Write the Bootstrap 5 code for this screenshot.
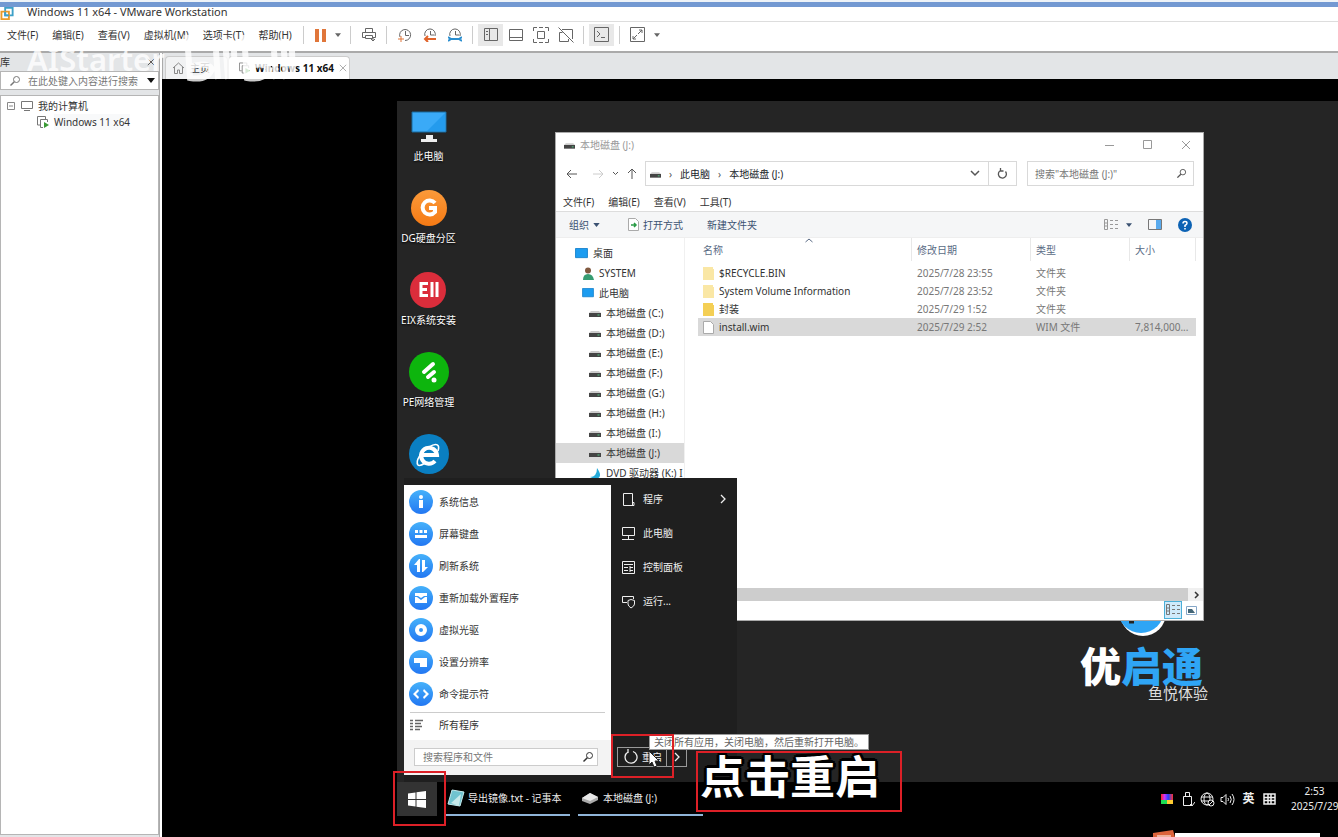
<!DOCTYPE html>
<html lang="zh-CN">
<head>
<meta charset="utf-8">
<meta name="viewport" content="width=device-width, initial-scale=1">
<title>Windows 11 x64 - VMware Workstation</title>
<link rel="stylesheet" href="https://cdn.jsdelivr.net/npm/bootstrap@5.3.0/dist/css/bootstrap.min.css">
<style>
  body { font: 10px/16px "Noto Sans", "Noto Sans CJK SC", sans-serif; color: #333; background: #fff; }
  svg { display: block; flex: none; fill: none; stroke: currentColor; }
  button, input { font: inherit; color: inherit; border: 0; background: none; padding: 0; }
  input { min-width: 0; outline: 0; }
  input::placeholder { color: #777; opacity: 1; }
  a { color: inherit; text-decoration: none; }
  .app { height: 100vh; min-height: 640px; }
  .accent { height: 7px; background: #7399d2; border-top: 2px solid #eef3f8; }
  .titlebar { height: 15px; border-bottom: 1px solid #ddd; font-size: 11px; gap: 12px; line-height: 10px; color: #333; }
  .menubar { height: 31px; border-bottom: 2px solid #aaa; padding-bottom: 3px; color: #666; }
  .menus { width: 298px; padding-left: 7px; gap: 14px; color: #333; }
  .tool { width: 25px; height: 22px; display: grid; place-items: center; }
  .tool.on { background: #e8e8e8; }
  .pause { width: 22px; }
  .drop { width: 14px; }
  .rule { width: 1px; height: 18px; margin: 0 5px; background: #ccc; }
  .side { width: 160px; background: #e3e5e7; border-right: 1px solid #aaa; }
  .sidehead { height: 18px; }
  .find { height: 19px; border: 1px solid #b5b5b5; background: #fff; padding: 0 3px 0 8px; gap: 7px; color: #777; }
  .tree { margin: 5px 0 2px; border: 1px solid #b5b5b5; background: #fff; padding: 2px 6px; }
  .node { gap: 5px; }
  .leaf { padding-left: 30px; }
  .workspace { margin-left: 2px; background: #000; }
  .tabs { height: 26px; background: #e3e5e7; border-left: 1px solid #aaa; padding-left: 2px; }
  .vtab { height: 23px; padding: 0 6px; border: 1px solid #ccc; border-bottom: 0; border-radius: 4px 4px 0 0; gap: 5px; background: #f1f2f3; }
  .vtab.now { background: #fff; font-weight: 700; color: #111; }
  .home { width: 63px; } .guest { width: 122px; }
  .screen { margin: 22px 0 0 235px; background: #252525; }
  .watermark { left: 27px; top: 33px; color: #fff; opacity: .8; pointer-events: none; font: 600 31px/52px "Noto Sans", sans-serif; }
  .shortcuts { left: 0; top: 5px; width: 63px; color: #fff; }
  .shortcut { height: 82px; text-align: center; text-shadow: 0 1px 2px #000; }
  .shortcut svg { margin: 0 auto 2px; }
  .brand { left: 679px; top: 488px; width: 132px; color: #fff; }
  .brand svg { margin-left: 44px; }
  .brandname { font: 900 41px/40px "Noto Sans CJK SC", sans-serif; white-space: nowrap; margin: 7px 0 1px 4px; }
  .brandname span { color: #2fa5f5; }
  .slogan { font: 15px/16px "Noto Sans CJK SC", sans-serif; text-align: right; color: #ddd; }
  .explorer { left: 158px; top: 31px; width: 649px; height: 489px; background: #fff; border: 1px solid #aaa; }
  .wtitle { height: 24px; padding: 0 12px 0 8px; gap: 5px; color: #999; }
  .wnav { height: 33px; padding: 0 9px 0 10px; color: #555; }
  .addr { height: 25px; border: 1px solid #d9d9d9; }
  .wsearch { width: 167px; margin-left: 10px; padding: 0 6px 0 7px; }
  .wmenu { height: 22px; gap: 14px; padding: 4px 0 0 7px; border-bottom: 1px solid #ddd; }
  .wtools { height: 26px; background: #f5f6f7; border-bottom: 1px solid #eee; padding: 0 11px 0 13px; color: #3b5272; }
  .drives { width: 129px; padding-top: 5px; white-space: nowrap; overflow: hidden; border-right: 1px solid #f0f0f0; }
  .drives li { height: 20px; gap: 5px; }
  .d0 { padding-left: 19px; } .d1 { padding-left: 26px; } .d2 { padding-left: 33px; }
  .pick { background: #d9d9d9; }
  .files { width: 498px; table-layout: fixed; margin-left: 13px; color: #777; border-collapse: separate; border-spacing: 0; }
  .files th { height: 23px; font-weight: 400; color: #5a6b85; border-right: 1px solid #e8e8e8; padding: 0 5px; }
  .files td { height: 18px; padding: 0 5px; white-space: nowrap; line-height: 16px; }
  .files .cell { display: flex; gap: 5px; color: #333; align-items: center; }
  .files .first td { height: 21px; padding-top: 3px; }
  .hscroll { height: 13px; background: #f0f0f0; padding-right: 3px; }
  .thumb { background: #cdcdcd; margin-right: 5px; }
  .wstatus { height: 19px; padding-right: 3px; color: #777; }
  .wview { width: 18px; height: 18px; display: grid; place-items: center; }
  .wview.on { background: #cfeafb; border: 1px solid #4bafd8; }
  .startmenu { left: 7px; bottom: 55px; width: 333px; height: 304px; background: #1f1f1f; }
  .apps { width: 207px; margin: 7px 0 7px; background: #fff; }
  .apps li { height: 32px; gap: 6px; padding-left: 5px; }
  .apps ul { padding-top: 1px; }
  .allapps { height: 28px; margin: 2px 6px 0; border-top: 1px solid #ccc; gap: 15px; padding-bottom: 3px; }
  .sfoot { height: 35px; background: #f3f3f3; padding: 8px 13px 9px 10px; }
  .sfoot .box { height: 18px; background: #fff; border: 1px solid #ccc; padding: 0 3px 0 8px; }
  .places { color: #eee; padding: 4px 10px 15px 10px; }
  .places li { height: 34px; gap: 7px; }
  .power { margin-left: -4px; border: 1px solid #999; width: 70px; height: 20px; }
  .power .go { width: 49px; gap: 3px; padding-left: 5px; border-right: 1px solid #999; }
  .taskbar { height: 55px; background: #000; color: #eee; padding-bottom: 21px; }
  .winkey { width: 40px; background: #333; display: grid; place-items: center; }
  .task { width: 125px; border-bottom: 2px solid #8fb4d8; gap: 3px; padding-left: 2px; }
  .task + .task { padding-left: 3px; gap: 4px; }
  .tray { gap: 5px; }
  .tray svg { width: 15px; }
  .ime { width: 17px; text-align: center; font-size: 12px; font-weight: 700; }
  .clock { width: 47px; line-height: 15px; margin-left: 9px; white-space: nowrap; }
  .popup { right: 18px; bottom: 0; width: 167px; height: 7px; }
  .popup i { width: 145px; height: 4px; background: #fff; }
  .tip { left: 252px; bottom: 87px; height: 16px; padding: 0 4px; background: #fff; border: 1px solid #999; color: #666; line-height: 14px; white-space: nowrap; }
  .mark-box { border: 2px solid #dc2027; }
  .m1 { left: -4px; bottom: 11px; width: 53px; height: 55px; }
  .m2 { left: 214px; bottom: 59px; width: 63px; height: 44px; }
  .m3 { left: 299px; bottom: 25px; width: 206px; height: 61px; }
  .caption { left: 303px; bottom: 39px; font: 700 45px/46px "Noto Sans CJK SC", sans-serif; color: #fff; white-space: nowrap;
    text-shadow: 3px 0 #000, -3px 0 #000, 0 3px #000, 0 -3px #000, 2px 2px #000, -2px 2px #000, 2px -2px #000, -2px -2px #000; }
  .pointer { left: 251px; bottom: 69px; }
</style>
</head>
<body>
<svg width="0" height="0" class="position-absolute" aria-hidden="true">
  <defs>
    <linearGradient id="blue" x2="0" y2="1"><stop stop-color="#45b1fa"/><stop offset="1" stop-color="#2277f2"/></linearGradient>
    <linearGradient id="orange" x2="0" y2="1"><stop stop-color="#fb9a3a"/><stop offset="1" stop-color="#f57a14"/></linearGradient>
    <linearGradient id="hue" x2="1" y2="0"><stop stop-color="#f22"/><stop offset=".3" stop-color="#c3f"/><stop offset=".6" stop-color="#24f"/><stop offset="1" stop-color="#f33"/></linearGradient>
  </defs>
  <symbol id="drive" viewBox="0 0 12 8"><path d="M2 2h8l2 2H0z" fill="#ccc" stroke="none"/><path d="M0 4h12v4H0z" fill="#444" stroke="none"/><path d="M8.500 6h2" stroke="#5c8"/></symbol>
  <symbol id="lens" viewBox="0 0 12 12"><circle cx="7.500" cy="4.500" r="3"/><path d="M5.300 6.700 1.500 10.500" stroke-width="1.500"/></symbol>
  <symbol id="caret" viewBox="0 0 8 5"><path d="M0 0h8L4 5z" fill="currentColor" stroke="none"/></symbol>
  <symbol id="cross" viewBox="0 0 10 10"><path d="m1 1 8 8M9 1 1 9"/></symbol>
  <symbol id="vm" viewBox="0 0 12 12"><path d="M3 9H.5V.5h8V3M10.500 6V3.500h-7v8H6"/><path d="m7 6 5 3-5 3z" fill="#3a9a35" stroke="none"/></symbol>
  <symbol id="clk" viewBox="0 0 14 14"><path d="M2 9a5.500 5.500 0 1 1 5 3.500M7.500 3v4.500H11"/></symbol>
  <symbol id="clkhalf" viewBox="0 0 14 14"><path d="M2 8a5.300 5.300 0 1 1 10 0M7.500 3v4H11"/></symbol>
  <symbol id="folder" viewBox="0 0 11 13"><path d="M0 0h10v2h1v11H0z" fill="currentColor" stroke="none"/></symbol>
  <symbol id="monitor" viewBox="0 0 14 12"><path d="M.5.5h13v10H.5z" fill="#1c9cf0" stroke="#1782cc"/></symbol>
  <symbol id="detail" viewBox="0 0 14 12"><path d="M.5.500h3v10h-3zM.5 4h3M.5 7h3M6 1.500h3m2 0h3M6 5.500h3m2 0h3M6 9.500h3m2 0h3"/></symbol>
</svg>

<div class="app d-flex flex-column overflow-hidden position-relative">
  <div class="accent flex-shrink-0"></div>
  <header class="titlebar d-flex align-items-start flex-shrink-0">
    <svg width="15" height="14" viewBox="0 0 15 15" stroke-width="2"><path d="M5 1h8v8H5z" stroke="#3da0c8"/><path d="M1 5h8v8H1z" stroke="#e99a28"/><path d="M5 5v4h4" stroke="#3da0c8"/></svg>
    <span>Windows 11 x64 - VMware Workstation</span>
  </header>
  <div class="menubar d-flex align-items-center flex-shrink-0">
    <nav class="menus d-flex text-nowrap flex-shrink-0"><a href="#">文件(F)</a><a href="#">编辑(E)</a><a href="#">查看(V)</a><a href="#">虚拟机(M)</a><a href="#">选项卡(T)</a><a href="#">帮助(H)</a></nav>
    <span class="rule"></span>
    <button class="tool pause" aria-label="暂停"><svg width="11" height="13" viewBox="0 0 11 13"><path d="M0 0h4v13H0zM7 0h4v13H7z" fill="#e0763a" stroke="none"/></svg></button>
    <button class="tool drop" aria-label="电源选项"><svg width="6" height="4"><use href="#caret"/></svg></button>
    <span class="rule"></span>
    <button class="tool" aria-label="发送按键"><svg width="14" height="14" viewBox="0 0 14 14"><path d="M3.500 4.500v-4h7v4M3 9.500H.5v-5h13v5H11M3.500 7.500h7v3h-7zM11 9v4M9 11l2 2 2-2"/></svg></button>
    <span class="rule"></span>
    <button class="tool" aria-label="拍摄快照"><svg width="14" height="14"><use href="#clk"/><path d="M0 11h6M3 8v6" stroke="#e0763a"/></svg></button>
    <button class="tool" aria-label="恢复快照"><svg width="14" height="14"><use href="#clkhalf"/><path d="M13 11H2M5 8l-3 3 3 3" stroke="#e0632a" stroke-width="2"/></svg></button>
    <button class="tool" aria-label="管理快照"><svg width="14" height="14"><use href="#clkhalf"/><path d="M3 11h8M0 9l3 2-3 2M14 9l-3 2 3 2" stroke="#2b8fd0" stroke-width="2"/></svg></button>
    <span class="rule"></span>
    <button class="tool on" aria-label="显示库"><svg width="14" height="14" viewBox="0 0 14 14"><path d="M.5.5h13v12H.5zM5.500.5v12M2 3.500h2M2 6.500h2"/></svg></button>
    <button class="tool" aria-label="缩略图栏"><svg width="14" height="14" viewBox="0 0 14 14"><path d="M.5 1.500h13v11H.5zM.5 9.500h13"/></svg></button>
    <button class="tool" aria-label="全屏"><svg width="16" height="16" viewBox="0 0 16 16"><path d="M4.500 4.500h7v7h-7zM.5 4V.5H4M6 .5h4M12 .5h3.500V4M15.500 12v3.500H12M10 15.500H6M4 15.500H.5V12"/></svg></button>
    <button class="tool" aria-label="Unity"><svg width="16" height="16" viewBox="0 0 16 16"><path d="M1.500 5.500v9h9M4 2.500h10.500V12M4.500 5.500h-3M.5.5l15 15M10.500 14.500V12"/></svg></button>
    <span class="rule"></span>
    <button class="tool on" aria-label="控制台"><svg width="16" height="16" viewBox="0 0 16 16"><path d="M.5.5h14v14H.5zM3 4l3 3-3 3M7 10.500h4"/></svg></button>
    <span class="rule"></span>
    <button class="tool" aria-label="拉伸"><svg width="16" height="16" viewBox="0 0 16 16"><path d="M.5.5h14v14H.5zM8 7l4-4M9 3h3v3M7 8l-4 4M3 9v3h3"/></svg></button>
    <button class="tool drop" aria-label="拉伸选项"><svg width="6" height="4"><use href="#caret"/></svg></button>
  </div>

  <main class="d-flex flex-grow-1 overflow-hidden">
    <aside class="side d-flex flex-column flex-shrink-0">
      <div class="sidehead d-flex align-items-center justify-content-between pe-1"><label for="lib">库</label><button aria-label="关闭库"><svg width="8" height="8" viewBox="0 0 10 10"><use href="#cross"/></svg></button></div>
      <div class="find d-flex align-items-center"><svg width="12" height="12"><use href="#lens"/></svg><input id="lib" class="flex-grow-1" placeholder="在此处键入内容进行搜索"><button aria-label="展开"><svg width="8" height="5" color="#111"><use href="#caret"/></svg></button></div>
      <div class="tree flex-grow-1">
        <div class="node d-flex align-items-center"><svg width="9" height="9" color="#888"><path d="M.5.500h7v7h-7zM2 4h4"/></svg><svg width="12" height="11" color="#777"><path d="M.5.5h11v7H.5zM3 9.500h6"/></svg><span>我的计算机</span></div>
        <div class="node leaf d-flex align-items-center"><svg width="12" height="12" color="#777"><use href="#vm"/></svg><span class="bg-light">Windows 11 x64</span></div>
      </div>
    </aside>

    <section class="workspace d-flex flex-column flex-grow-1 overflow-hidden">
      <div class="tabs d-flex align-items-end flex-shrink-0">
        <a href="#" class="vtab home d-flex align-items-center"><svg width="13" height="12" viewBox="0 0 13 12" color="#888"><path d="m1 6 5.500-5L12 6M2.500 5v6.500h3V8h2v3.500h3V5"/></svg>主页</a>
        <a href="#" class="vtab now guest d-flex align-items-center text-nowrap"><svg class="ms-1" width="11" height="12" color="#888"><use href="#vm"/></svg><span>Windows 11 x64</span><svg width="8" height="8" viewBox="0 0 10 10" color="#999"><use href="#cross"/></svg></a>
      </div>

      <div class="screen position-relative flex-grow-1 d-flex flex-column">
        <nav class="shortcuts position-absolute text-nowrap">
          <a href="#" class="shortcut d-block"><svg width="40" height="40" viewBox="0 0 40 40" stroke="none"><path d="M3 6h34v20H3z" fill="#3aaaf7" stroke="#186b9f"/><path d="m18 25 18-18v18z" fill="#249bed" stroke="none"/><path d="M17 29h7v4h4v3H12v-3h5z" fill="#eee" stroke="none"/></svg>此电脑</a>
          <a href="#" class="shortcut d-block"><svg width="40" height="40" viewBox="0 0 40 40"><circle cx="20" cy="20" r="18" fill="url(#orange)" stroke="none"/><path d="M26 15a7 7 0 1 0 0 9v-4h-6" stroke="#fff" stroke-width="4"/></svg>DG硬盘分区</a>
          <a href="#" class="shortcut d-block"><svg width="40" height="40" viewBox="0 0 40 40"><circle cx="19" cy="20" r="18" fill="#db2d3b" stroke="none"/><path d="M19 13.500h-7v12h7M12 19.500h6M23 12v15M28 12v15" stroke="#fff" stroke-width="3"/></svg>EIX系统安装</a>
          <a href="#" class="shortcut d-block"><svg width="40" height="40" viewBox="0 0 40 40"><circle cx="20" cy="20" r="20" fill="#0db50d" stroke="none"/><path d="m15 20 9-8M19 25l6-5" stroke="#fff" stroke-width="4" stroke-linecap="round"/><circle cx="25" cy="28" r="2.500" fill="#fff" stroke="none"/></svg>PE网络管理</a>
          <a href="#" class="shortcut d-block" aria-label="Internet Explorer"><svg width="40" height="40" viewBox="0 0 40 40"><circle cx="20" cy="20" r="20" fill="#0a7fc2" stroke="none"/><path d="M13 21h15a8 8 0 1 0-2 6" stroke="#fff" stroke-width="4"/><path d="M29 17c2-6-1-9-9-4C12 18 6 27 9 31c1 1 4 0 7-2" stroke="#fff" stroke-width="1.600"/></svg></a>
        </nav>

        <div class="brand position-absolute"><svg width="46" height="48" viewBox="0 0 46 48"><circle cx="23" cy="24" r="23" fill="#fff" stroke="none"/><circle cx="21" cy="21" r="23" fill="#2fa5f5" stroke="none"/><path d="M9 33h5" stroke="#222" stroke-width="3"/></svg><div class="brandname">优<span>启通</span></div><div class="slogan">鱼悦体验</div></div>

        <section class="explorer position-absolute d-flex flex-column">
          <div class="wtitle d-flex align-items-center flex-shrink-0"><svg width="11" height="8"><use href="#drive"/></svg><span>本地磁盘 (J:)</span><span class="ms-auto d-flex gap-4 align-items-center"><button class="me-1" aria-label="最小化"><svg width="10" height="10"><path d="M0 5.500h9"/></svg></button><button class="me-1" aria-label="最大化"><svg width="10" height="10"><path d="M.5.500h8v8h-8z"/></svg></button><button aria-label="关闭"><svg width="10" height="10"><use href="#cross"/></svg></button></span></div>
          <div class="wnav d-flex align-items-center flex-shrink-0">
            <button aria-label="后退"><svg width="11" height="10"><path d="M11 5H1m4-4L1 5l4 4"/></svg></button><button class="ms-3" aria-label="前进"><svg width="11" height="10" color="#ccc"><path d="M0 5h10M6 1l4 4-4 4"/></svg></button><button class="ms-2" aria-label="最近"><svg width="7" height="5"><path d="m1 1 2.500 2.500L6 1"/></svg></button><button class="mx-2" aria-label="向上"><svg width="10" height="11"><path d="M5 11V1M1 5l4-4 4 4"/></svg></button>
            <div class="addr d-flex align-items-center flex-grow-1 ps-1 gap-2"><svg width="11" height="8"><use href="#drive"/></svg><span>›</span><span class="text-dark">此电脑</span><span>›</span><span class="text-dark">本地磁盘 (J:)</span><button class="ms-auto me-2" aria-label="地址列表"><svg width="10" height="7"><path d="m1 1 4 4 4-4" stroke-width="1.500"/></svg></button></div>
            <button class="addr border-start-0 px-2" aria-label="刷新"><svg width="11" height="11"><path d="M3.500 2.500a4 4 0 1 0 5 1M3.500 0v3h3" stroke-width="1.300"/></svg></button>
            <div class="addr wsearch d-flex align-items-center"><input class="flex-grow-1" aria-label="搜索" placeholder='搜索"本地磁盘 (J:)"'><svg width="11" height="11"><use href="#lens"/></svg></div>
          </div>
          <nav class="wmenu d-flex flex-shrink-0"><a href="#">文件(F)</a><a href="#">编辑(E)</a><a href="#">查看(V)</a><a href="#">工具(T)</a></nav>
          <div class="wtools d-flex align-items-center flex-shrink-0">
            <button class="d-flex align-items-center gap-1">组织<svg width="7" height="4"><use href="#caret"/></svg></button>
            <button class="d-flex align-items-center gap-1 mx-4 ps-1"><svg width="11" height="13"><path d="M.5.500h7l3 3v9H.5z" fill="#fff" stroke="#aaa"/><path d="M3 7h5M6 5l2 2-2 2" stroke="#289b45" stroke-width="1.500"/></svg>打开方式</button>
            <button>新建文件夹</button>
            <span class="ms-auto d-flex align-items-center"><button class="d-flex align-items-center gap-2" aria-label="视图"><svg width="14" height="12" color="#999"><use href="#detail"/></svg><svg width="6" height="4"><use href="#caret"/></svg></button><button class="mx-3" aria-label="预览窗格"><svg width="14" height="11"><path d="M.5.500h13v10H.5z" stroke="#777"/><path d="M8 1h5v9H8z" fill="#59aaed" stroke="none"/></svg></button><button aria-label="帮助"><svg width="14" height="14" viewBox="0 0 14 14"><circle cx="7" cy="7" r="7" fill="#0c62b4" stroke="none"/><path d="M5 5.500q0-2 2-2t2 1.700Q9 6.500 7 7.500V9M7 10v1.500" stroke="#fff" stroke-width="1.500"/></svg></button></span>
          </div>
          <div class="d-flex flex-grow-1 overflow-hidden">
            <ul class="drives list-unstyled m-0 flex-shrink-0" id="drives">
              <li class="d0 d-flex align-items-center"><svg width="13" height="11"><use href="#monitor"/></svg>桌面</li>
              <li class="d1 d-flex align-items-center"><svg width="12" height="13"><circle cx="6" cy="3.500" r="3" fill="#80583f" stroke="none"/><path d="M1 13q0-6 5-6t6 6z" fill="#379c72" stroke="none"/></svg>SYSTEM</li>
              <li class="d1 d-flex align-items-center"><svg width="12" height="10"><use href="#monitor"/></svg>此电脑</li>
            </ul>
            <div>
              <table class="files"><colgroup><col style="width:214px"><col style="width:119px"><col style="width:99px"><col style="width:66px"></colgroup>
                <thead><tr><th class="position-relative">名称<svg class="position-absolute top-0 start-50" width="8" height="5"><path d="m.5 4 3.500-3 3.500 3"/></svg></th><th>修改日期</th><th>类型</th><th>大小</th></tr></thead>
                <tbody>
                  <tr class="first"><td><span class="cell"><svg width="11" height="13" color="#fae7a5"><use href="#folder"/></svg>$RECYCLE.BIN</span></td><td>2025/7/28 23:55</td><td>文件夹</td><td></td></tr>
                  <tr><td><span class="cell"><svg width="11" height="13" color="#fae7a5"><use href="#folder"/></svg>System Volume Information</span></td><td>2025/7/28 23:52</td><td>文件夹</td><td></td></tr>
                  <tr><td><span class="cell"><svg width="11" height="13" color="#f4cf55"><use href="#folder"/></svg>封装</span></td><td>2025/7/29 1:52</td><td>文件夹</td><td></td></tr>
                  <tr class="pick"><td><span class="cell"><svg width="11" height="13"><path d="M.5.500h7l3 3v9H.5z" fill="#fff" stroke="#aaa"/></svg>install.wim</span></td><td>2025/7/29 2:52</td><td>WIM 文件</td><td>7,814,000...</td></tr>
                </tbody>
              </table>
            </div>
          </div>
          <div class="hscroll d-flex flex-shrink-0"><div class="thumb flex-grow-1"></div><svg class="align-self-center" width="7" height="8"><path d="m2 1 3 3-3 3" stroke-width="1.500"/></svg></div>
          <div class="wstatus d-flex justify-content-end flex-shrink-0"><button class="wview on" aria-label="详细信息"><svg width="14" height="12"><use href="#detail"/></svg></button><button class="wview" aria-label="大图标"><svg width="11" height="9"><path d="M.5.500h10v8H.5z" stroke="#86a7c8"/><path d="M2 3h4l3 4H2z" fill="#467" stroke="none"/></svg></button></div>
        </section>

        <section class="startmenu position-absolute d-flex">
          <div class="apps d-flex flex-column flex-shrink-0">
            <ul class="list-unstyled m-0 flex-grow-1" id="apps"></ul>
            <a href="#" class="allapps d-flex align-items-center flex-shrink-0"><svg width="14" height="13" color="#666"><path d="M0 1.500h3m2 0h8M0 4.500h3m2 0h6M0 7.500h3m2 0h7M0 10.500h3m2 0h5" stroke-width="1.300"/></svg>所有程序</a>
            <div class="sfoot"><div class="box d-flex align-items-center"><input class="flex-grow-1" aria-label="搜索程序和文件" placeholder="搜索程序和文件"><svg width="12" height="12"><use href="#lens"/></svg></div></div>
          </div>
          <div class="places d-flex flex-column flex-grow-1">
            <ul class="list-unstyled m-0 flex-grow-1">
              <li class="d-flex align-items-center"><svg width="15" height="15"><path d="M2.500 1.500h9v12h-9zM11 10.500h2v3h-3"/></svg>程序<svg class="ms-auto" width="8" height="11"><path d="m2 1 4 4-4 4" stroke-width="1.300"/></svg></li>
              <li class="d-flex align-items-center"><svg width="15" height="15"><path d="M1.500 1.500h12v8h-12zM7.500 9v4M1 13.500h12"/></svg>此电脑</li>
              <li class="d-flex align-items-center"><svg width="15" height="15"><path d="M1.500 1.500h12v12h-12zM3 4.500h9M3 7.500h4M3 10.500h4M9 6v6M9 7.500h3M9 10.500h3"/></svg>控制面板</li>
              <li class="d-flex align-items-center"><svg width="15" height="15"><path d="M6 8.500H1.500v-6h11V5M7 6.500l3-1 3.500 1V10q0 2-3.500 4Q7 12 7 10z"/></svg>运行...</li>
            </ul>
            <div class="power d-flex"><button class="go d-flex align-items-center"><svg width="16" height="16"><path d="M5 3a6 6 0 1 0 5-.5M5 0v4" stroke-width="1.300"/></svg>重启</button><button class="flex-grow-1" aria-label="更多电源选项"><svg class="mx-auto" width="8" height="12"><path d="m2 2 4 4-4 4" stroke-width="1.300"/></svg></button></div>
          </div>
        </section>

        <footer class="taskbar d-flex mt-auto flex-shrink-0">
          <button class="winkey" aria-label="开始"><svg width="18" height="17" viewBox="0 0 18 17"><path d="M0 2.500 7.500 1.500V8H0zM8.500 1.300 18 0v8H8.500zM0 9h7.500v6.500L0 14.500zM8.500 9H18v8l-9.500-1.300z" fill="#fff" stroke="none"/></svg></button>
          <button class="task ms-2 d-flex align-items-center text-nowrap"><svg width="18" height="19" viewBox="0 0 18 19"><path d="m5 1 12 2-4 14L1 15z" fill="#70c3d0" stroke="#c5ecef"/><path d="m4 14 10-9-2 12z" fill="#c6e9eb" stroke="none"/></svg>导出镜像.txt - 记事本</button>
          <button class="task ms-2 d-flex align-items-center text-nowrap"><svg width="18" height="14" viewBox="0 0 18 14"><path d="m1 7 8-5 8 4v3l-8 4-8-3z" fill="#aaa" stroke="none"/><path d="m1 7 8-5 8 4-8 4z" fill="#e8e8e8" stroke="none"/></svg>本地磁盘 (J:)</button>
          <div class="tray ms-auto d-flex align-items-center">
            <svg height="12" viewBox="0 0 15 12"><path d="M1 1h12v10H1z" fill="url(#hue)" stroke="none"/><path d="M1 7h6v4H1z" fill="#1cdd54" stroke="none"/><path d="M7 7h6v4H7z" fill="#fc3" stroke="none"/></svg>
            <svg height="15" viewBox="0 0 15 15"><path d="M5.500 4.500v-4h4v4M3.500 4.500h8v9h-8zM10 12l2 2 3-4"/></svg>
            <svg height="15" viewBox="0 0 15 15"><circle cx="7" cy="7" r="6"/><ellipse cx="7" cy="7" rx="3" ry="6"/><path d="M1 5h12M1 9h8"/><circle cx="11" cy="11" r="3" fill="#000"/><path d="m9 13 4-4"/></svg>
            <svg height="13" viewBox="0 0 15 13"><path d="M1 4.500h2l3-3v10l-3-3H1zM8 5q1 1.500 0 3M10 3q2.500 3.500 0 7M12 1q4 5.500 0 11"/></svg>
            <span class="ime">英</span>
            <svg height="14" viewBox="0 0 15 14"><path d="M2 2h11v10H2zM6 2v10M9 2v10M2 5.500h11M2 8.500h11" stroke-width="1.500"/></svg>
            <div class="clock text-center">2:53<br>2025/7/29</div>
          </div>
        </footer>

        <div class="popup position-absolute d-flex align-items-end"><svg width="22" height="7"><path d="m0 3 20-3 2 7H0z" fill="#db633b" stroke="none"/><path d="M4 6h14" stroke="#fff"/></svg><i></i></div>
        <div class="tip position-absolute" role="tooltip">关闭所有应用，关闭电脑，然后重新打开电脑。</div>
        <div class="caption position-absolute">点击重启</div>
        <div class="mark-box m1 position-absolute"></div><div class="mark-box m2 position-absolute"></div><div class="mark-box m3 position-absolute"></div>
        <svg class="pointer position-absolute" width="12" height="18" viewBox="0 0 12 18"><path d="M1 1v14l3-3 2 5 3-1-2-5h4z" fill="#fff" stroke="#222"/></svg>
      </div>
    </section>
  </main>

  <div class="watermark position-absolute d-flex">AIStarter<svg class="ms-3" width="122" height="52" viewBox="0 0 122 52" stroke-width="6"><path d="M6 2 9 45Q26 48 31 36Q26 28 9 34M63 2l3 43q17 3 22-9-5-8-22-2M35 18l2 28M44 6l3 40M53 18l1 28M93 18l2 28M102 6l3 40M111 18l1 28"/></svg></div>
</div>

<script src="https://cdn.jsdelivr.net/npm/bootstrap@5.3.0/dist/js/bootstrap.bundle.min.js"></script>
<script>
  const drives = document.getElementById('drives');
  for (const d of 'CDEFGHIJ') {
    drives.insertAdjacentHTML('beforeend', `<li class="d2 d-flex align-items-center ${d === 'J' ? 'pick' : ''}"><svg width="12" height="8"><use href="#drive"/></svg>本地磁盘 (${d}:)</li>`);
  }
  drives.insertAdjacentHTML('beforeend', '<li class="d2 d-flex align-items-center"><svg width="12" height="12"><path d="M1 10q7 0 7-9 7 10-2 11z" fill="#24aad9" stroke="none"/></svg>DVD 驱动器 (K:) I</li>');

  const apps = [
    ['系统信息', '<circle cx="12" cy="7" r="2"/><path d="M10 10h4v8h-4z"/>'],
    ['屏幕键盘', '<path d="M6 8h3v3H6zM10.500 8h3v3h-3zM15 8h3v3h-3zM6 13h12v3H6z"/>'],
    ['刷新系统', '<path d="M8 18V11H5l5-6h1v13zM13 6h3v7h3l-5 5h-1z"/>'],
    ['重新加载外置程序', '<path d="M6 7h12v3h-3l-3 2-3-2H6zM6 11h2l4 3 4-3h2v6H6z"/>'],
    ['虚拟光驱', '<path fill-rule="evenodd" d="M12 6a6 6 0 1 0 0 12 6 6 0 0 0 0-12m0 4a2 2 0 1 1 0 4 2 2 0 0 1 0-4"/>'],
    ['设置分辨率', '<path d="M5 8h13v9h-7v-4H5z"/>'],
    ['命令提示符', '<path d="m9 7 1 2-3 3 3 3-1 2-5-5zM15 7l5 5-5 5-1-2 3-3-3-3z"/>']
  ];
  document.getElementById('apps').innerHTML = apps.map(([name, art]) =>
    `<li class="d-flex align-items-center"><svg width="24" height="24" viewBox="0 0 24 24"><circle cx="12" cy="12" r="12" fill="url(#blue)" stroke="none"/><g fill="#fff" stroke="none">${art}</g></svg><a href="#">${name}</a></li>`).join('');
</script>
</body>
</html>
